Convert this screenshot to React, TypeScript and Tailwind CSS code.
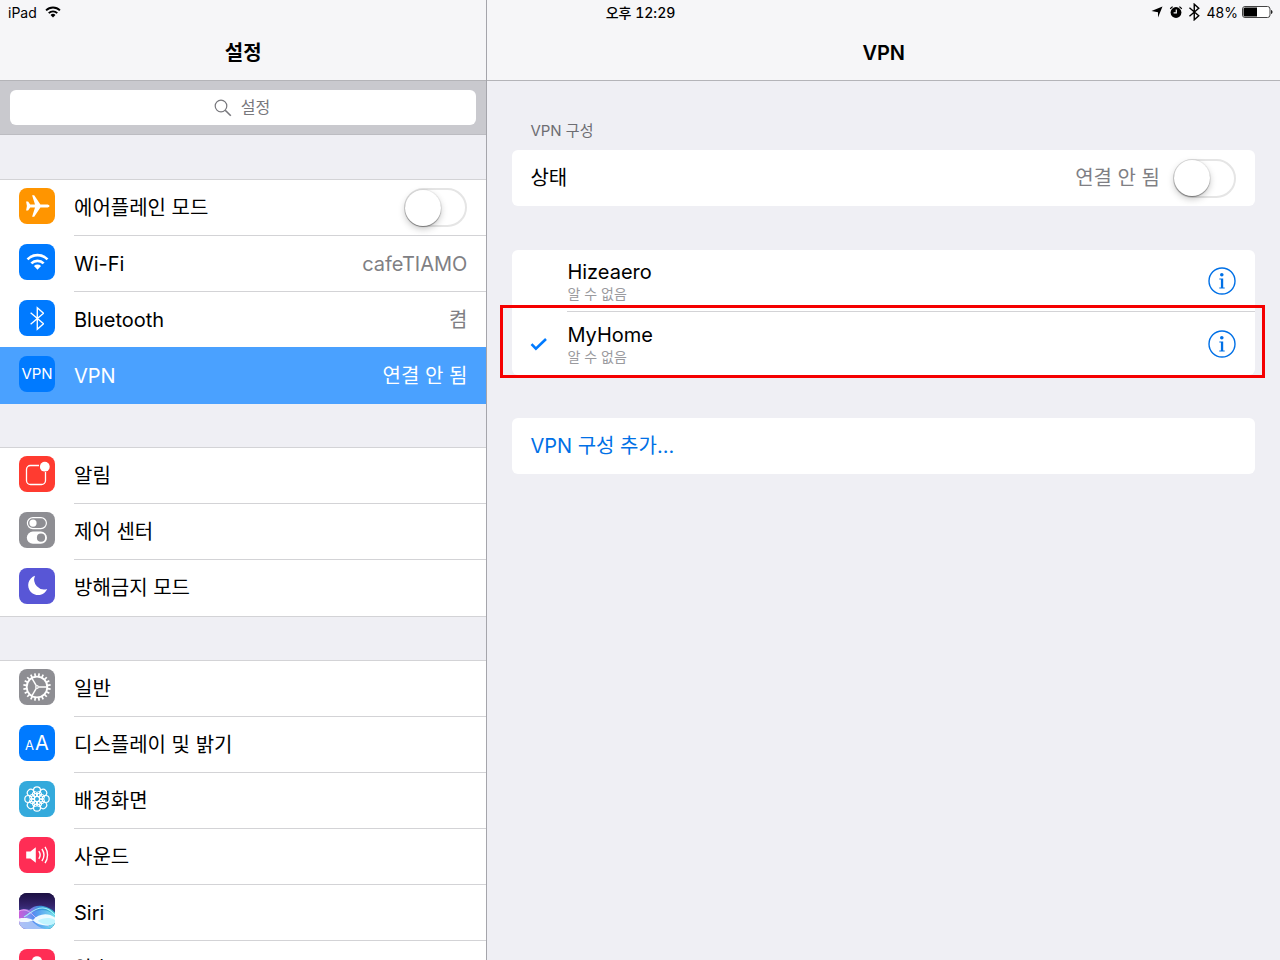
import type { ReactNode } from "react";

const FONT = "font-['Inter','Noto_Sans_CJK_KR',sans-serif]";

function Tile({ className, children }: { className: string; children?: ReactNode }) {
  return (
    <span className={`mt-2 flex size-9 shrink-0 justify-center overflow-hidden rounded-lg text-white ${className}`}>
      {children}
    </span>
  );
}

function WifiGlyph({ className }: { className: string }) {
  return (
    <svg viewBox="0 0 24 18" className={className} aria-hidden="true">
      <g fill="none" stroke="currentColor" strokeWidth="2.800">
        <path d="M1.600 6.600a14.600 14.600 0 0 1 20.800 0" />
        <path d="M5.600 10.800a9 9 0 0 1 12.800 0" />
      </g>
      <path d="M12 17.400 8.300 13.600a5.300 5.300 0 0 1 7.400 0z" fill="currentColor" />
    </svg>
  );
}

function BluetoothGlyph({ className, width }: { className: string; width: string }) {
  return (
    <svg viewBox="0 0 14 24" className={className} aria-hidden="true">
      <path d="M0.600 6.400 13 17 7 22.400V1.600L13 7 0.600 17.600" fill="none" stroke="currentColor" strokeWidth={width} />
    </svg>
  );
}

function Plane() {
  return (
    <svg viewBox="0 0 36 36" className="size-9" aria-hidden="true">
      <path
        fill="#fff"
        d="M30.600 18c0 .9-1.400 1.500-3 1.500h-6.200L15.200 28.800h-2.100l2.900-9.300h-4.800L9.100 22.500H7.100l.8-4.500-.8-4.500h2l2.100 3h4.800L13.100 7.200h2.100l6.200 9.300h6.200c1.600 0 3 .6 3 1.500z"
      />
    </svg>
  );
}

function Notify() {
  return (
    <svg viewBox="0 0 36 36" className="size-9" aria-hidden="true">
      <path d="M20 9.500h-8.500a4 4 0 0 0-4 4v11a4 4 0 0 0 4 4h11a4 4 0 0 0 4-4V16" fill="none" stroke="#fff" strokeWidth="1.300" />
      <circle cx="25.800" cy="10.700" r="4.900" fill="#fff" />
    </svg>
  );
}

function Toggles() {
  return (
    <svg viewBox="0 0 36 36" className="size-9" aria-hidden="true">
      <rect x="8.400" y="5.600" width="19" height="11" rx="5.500" fill="none" stroke="#fff" strokeWidth="1.200" />
      <circle cx="14" cy="11.100" r="3.600" fill="#fff" />
      <rect x="7.800" y="19.600" width="20.200" height="12.200" rx="6.100" fill="#fff" />
      <circle cx="22" cy="25.700" r="4.100" fill="#8e8e93" />
    </svg>
  );
}

function Moon() {
  return (
    <svg viewBox="0 0 36 36" className="size-9" aria-hidden="true">
      <path d="M16 7.800A9.900 9.900 0 1 0 28.200 21 9.900 9.900 0 0 1 16 7.800z" fill="#fff" />
    </svg>
  );
}

const TEETH = Array.from({ length: 20 }, (_, i) => i * 18);
const PETALS = Array.from({ length: 8 }, (_, i) => i * 45);

function Gear() {
  return (
    <svg viewBox="0 0 36 36" className="size-9" aria-hidden="true">
      <g stroke="#fff" fill="none">
        <circle cx="18" cy="18" r="10.300" strokeWidth="1.800" />
        {TEETH.map((a) => (
          <path key={a} d="M18 7.500V4.200" strokeWidth="1.700" transform={`rotate(${a + 9} 18 18)`} />
        ))}
        <circle cx="18" cy="18" r="1.300" strokeWidth="1.200" />
        {[90, 210, 330].map((a) => (
          <path key={a} d="M18 16.500V8" strokeWidth="1.400" transform={`rotate(${a} 18 18)`} />
        ))}
      </g>
    </svg>
  );
}

function Flower() {
  return (
    <svg viewBox="0 0 36 36" className="size-9" aria-hidden="true">
      <g stroke="#fff" fill="none" strokeWidth="1.200">
        {PETALS.map((a) => (
          <circle key={a} cx="18" cy="9.300" r="3.500" transform={`rotate(${a} 18 18)`} />
        ))}
        {PETALS.map((a) => (
          <circle key={a} cx="18" cy="12.800" r="2.500" strokeWidth="0.900" transform={`rotate(${a + 22} 18 18)`} />
        ))}
        <circle cx="18" cy="18" r="2.600" />
      </g>
    </svg>
  );
}

function Speaker() {
  return (
    <svg viewBox="0 0 36 36" className="size-9" aria-hidden="true">
      <path d="M7.200 14.500h4.200l5.400-4.300v15.600l-5.400-4.300H7.200z" fill="#fff" />
      <g stroke="#fff" fill="none" strokeWidth="1.400">
        <path d="M19.800 14.200a6.500 6.500 0 0 1 0 7.600" />
        <path d="M22.900 12a10.500 10.500 0 0 1 0 12" />
        <path d="M26 9.800a14.500 14.500 0 0 1 0 16.400" />
      </g>
    </svg>
  );
}

function SiriArt() {
  return (
    <svg viewBox="0 0 36 36" className="size-9" aria-hidden="true">
      <defs>
        <linearGradient id="night" x1="0" y1="0" x2="0" y2="1">
          <stop offset="0" stopColor="#1c1042" />
          <stop offset="0.350" stopColor="#34246c" />
          <stop offset="1" stopColor="#4a8be0" />
        </linearGradient>
        <linearGradient id="wave" x1="0" y1="0" x2="1" y2="0">
          <stop offset="0" stopColor="#d860e0" />
          <stop offset="0.300" stopColor="#9a78ee" />
          <stop offset="0.550" stopColor="#3b9be8" />
          <stop offset="1" stopColor="#36ccd0" />
        </linearGradient>
        <linearGradient id="base" x1="0" y1="0" x2="1" y2="0">
          <stop offset="0" stopColor="#d0b8f6" />
          <stop offset="0.400" stopColor="#5090f4" />
          <stop offset="1" stopColor="#8eeaf6" />
        </linearGradient>
      </defs>
      <path d="M0 0h36v36H0z" fill="url(#night)" />
      <path d="M0 17.500c4-2 7-2 10-.5 4-4 9-5 14-4 5 1 9 3.500 12 6.500v16.500H0z" fill="url(#wave)" opacity="0.900" />
      <path d="M0 29c7-3 12-12 23-12 6 0 10 3 13 6v13H0z" fill="url(#base)" opacity="0.800" />
      <path d="M5 24C11 21 15 14.500 24 15c5 .3 9 3.500 12 7" fill="none" stroke="#9ef0fa" strokeWidth="1.200" />
      <path d="M0 18c6-2.500 10 0 14 4s9 9 16 11" fill="none" stroke="#f0c0fa" strokeWidth="0.700" />
      <path d="M0 25.500c5-1 10-.5 14 1.500 5-6.500 15-8 22-2.500v5.500c-7 4-16 3-22-2.500-4 2-9 2.500-14 1z" fill="#f4feff" opacity="0.950" />
      <path d="M19 27.500c5-3 12-3.500 17-.5v3c-6 3.500-13 1.500-17-2z" fill="#c0f4ff" />
      <path d="M0 29c5 1 9 0 13-1 5 5.500 10 8 15 8H0z" fill="#a9c4f6" opacity="0.900" />
    </svg>
  );
}

function Fingerprint() {
  return (
    <svg viewBox="0 0 36 36" className="size-9" aria-hidden="true">
      <g fill="none" stroke="#fff" strokeWidth="1.700">
        <path d="M9.500 23v-4.500M26.500 23v-4.500" />
        <path d="M13 26v-8.500a5 5 0 0 1 10 0V26" />
        <path d="M18 17v12" />
      </g>
      <path d="M13 11.500a5 4.300 0 0 1 10 0z" fill="#fff" />
    </svg>
  );
}

function Switch({ label }: { label: string }) {
  return (
    <span className="relative flex h-10 w-[63px] shrink-0 items-center">
      <input
        type="checkbox"
        role="switch"
        aria-label={label}
        className="peer h-[39px] w-full appearance-none rounded-full border-2 border-[#e5e5e5] bg-white checked:border-[#4cd964] checked:bg-[#4cd964]"
      />
      <span className="pointer-events-none absolute top-[2px] left-px size-9 rounded-full bg-white shadow-[0_3px_7px_rgba(0,0,0,0.22),0_1px_1px_rgba(0,0,0,0.35),0_0_0_1px_rgba(0,0,0,0.05)] peer-checked:left-[26px]" />
    </span>
  );
}

type Item = { label: string; icon: ReactNode; value?: string; active?: boolean };

function ItemRow({ item, last }: { item: Item; last: boolean }) {
  const line = last ? "" : "border-b border-[#d3d3d6]";
  return (
    <li className={item.active ? "relative -mt-px bg-[#4aa1ff] pt-px text-white" : "text-black"}>
      <a href="#" className="flex h-14 items-start gap-[19px] pl-[19px]">
        {item.icon}
        <span className={`flex h-14 flex-1 items-center justify-between pr-[19px] ${line}`}>
          <span>{item.label}</span>
          {item.value && <span className={item.active ? "" : "text-[#7f7f84]"}>{item.value}</span>}
        </span>
      </a>
    </li>
  );
}

const network: Item[] = [
  { label: "Wi-Fi", value: "cafeTIAMO", icon: <Tile className="items-center bg-[#007aff]"><WifiGlyph className="w-[23px]" /></Tile> },
  { label: "Bluetooth", value: "켬", icon: <Tile className="items-center bg-[#007aff]"><BluetoothGlyph className="h-[25px]" width="1.300" /></Tile> },
  { label: "VPN", value: "연결 안 됨", active: true, icon: <Tile className="items-center bg-[#007aff] text-[15px]">VPN</Tile> },
];

const alerts: Item[] = [
  { label: "알림", icon: <Tile className="bg-[#ff3b30]"><Notify /></Tile> },
  { label: "제어 센터", icon: <Tile className="bg-[#8e8e93]"><Toggles /></Tile> },
  { label: "방해금지 모드", icon: <Tile className="bg-[#5856d6]"><Moon /></Tile> },
];

const general: Item[] = [
  { label: "일반", icon: <Tile className="bg-[#8e8e93]"><Gear /></Tile> },
  {
    label: "디스플레이 및 밝기",
    icon: (
      <Tile className="items-baseline gap-px bg-[#007aff] leading-9">
        <span className="text-[13px]">A</span>
        <span className="text-[20px]">A</span>
      </Tile>
    ),
  },
  { label: "배경화면", icon: <Tile className="bg-[#34aadc]"><Flower /></Tile> },
  { label: "사운드", icon: <Tile className="bg-[#ff2d55]"><Speaker /></Tile> },
  { label: "Siri", icon: <Tile className="bg-[#1a1140]"><SiriArt /></Tile> },
  { label: "암호", icon: <Tile className="bg-[#ff2d55]"><Fingerprint /></Tile> },
];

function StatusBar() {
  return (
    <div className="absolute inset-x-0 top-0 z-10 grid h-6 grid-cols-3 items-center pr-[7px] pl-2 text-[14px]">
      <span className="flex items-center gap-2">
        iPad
        <WifiGlyph className="w-4" />
      </span>
      <span className="text-center font-medium tabular-nums">오후 12:29</span>
      <span className="flex items-center justify-end gap-1">
        <svg viewBox="0 0 12 12" className="mr-[2px] size-3" aria-hidden="true">
          <path d="M11.500.500 7 11.500V6.200L.500 5z" fill="currentColor" />
        </svg>
        <svg viewBox="0 0 14 14" className="mr-[2px] size-[14px]" aria-hidden="true">
          <circle cx="7" cy="7.500" r="5.400" fill="currentColor" />
          <path d="M1.200 3.800 3.600 1.600M12.800 3.800 10.400 1.600" stroke="currentColor" strokeWidth="1.200" />
          <path d="M7.300 4.400v3.500H4.600" fill="none" stroke="#f7f7f8" strokeWidth="1.200" />
        </svg>
        <BluetoothGlyph className="mr-[3px] h-[18px]" width="1.900" />
        <span>48%</span>
        <svg viewBox="0 0 31 12" className="h-3 w-[31px]" aria-hidden="true">
          <rect x="0.500" y="0.500" width="27.500" height="11" rx="2.500" fill="#fff" stroke="#444" />
          <path d="M3 1.500h12v9H3a1.500 1.500 0 0 1-1.500-1.500V3A1.500 1.500 0 0 1 3 1.500z" fill="#000" />
          <path d="M29 4c2 .5 2 3.500 0 4z" fill="#222" />
        </svg>
      </span>
    </div>
  );
}

function TitleBar({ children }: { children: ReactNode }) {
  return (
    <header className="flex h-[81px] shrink-0 items-end justify-center border-b border-[#b4b4b8] bg-[#f6f6f8] pb-[11px]">
      <h1 className="text-[20px] leading-8 font-semibold">{children}</h1>
    </header>
  );
}

function InfoButton({ name }: { name: string }) {
  return (
    <button type="button" aria-label={`${name} 정보`} className="text-[#0070e6]">
      <svg viewBox="0 0 28 28" className="size-7" aria-hidden="true">
        <circle cx="14" cy="14" r="13" fill="none" stroke="currentColor" strokeWidth="1.400" />
        <circle cx="13.800" cy="7.700" r="1.800" fill="currentColor" />
        <path d="M11.300 11.400h3.900v9h1.500v1.100h-5.400v-1.100h1.600v-7.900h-1.600z" fill="currentColor" />
      </svg>
    </button>
  );
}

function VpnEntry({ name, selected }: { name: string; selected?: boolean }) {
  return (
    <div className="flex pl-[18px]">
      <span className="flex w-[37px] shrink-0 items-center">
        {selected && (
          <svg viewBox="0 0 18 14" className="h-[14px] w-[18px]" aria-hidden="true">
            <path d="M1.500 7.200 5.900 11.600 16 2" fill="none" stroke="#007aff" strokeWidth="2.600" />
          </svg>
        )}
      </span>
      <div className={`flex flex-1 items-center justify-between pr-[19px] ${selected ? "h-[63px]" : "h-[62px] border-b border-[#d3d3d6]"}`}>
        <div className="pt-[2px]">
          <p className="text-[20px] leading-6">{name}</p>
          <p className="text-[14px] leading-5 text-[#9a9a9e]">알 수 없음</p>
        </div>
        <InfoButton name={name} />
      </div>
    </div>
  );
}

export default function App() {
  return (
    <div className={`relative flex h-screen overflow-hidden bg-[#efeff4] text-[20px] text-black ${FONT}`}>
      <StatusBar />
      <aside className="flex w-[calc(38%+1px)] shrink-0 flex-col overflow-hidden border-r border-[#a5a5ab]">
        <TitleBar>설정</TitleBar>
        <div className="shrink-0 border-b border-[#bcbcc1] bg-[#c9c9ce] px-[10px] py-[9px]">
          <label className="flex h-[35px] items-center justify-center gap-[9px] rounded-md bg-white text-[#77777c]">
            <svg viewBox="0 0 18 18" className="size-[18px]" aria-hidden="true">
              <circle cx="7" cy="7" r="5.800" fill="none" stroke="currentColor" strokeWidth="1.200" />
              <path d="m11.200 11.200 5.600 5.600" stroke="currentColor" strokeWidth="1.600" />
            </svg>
            <input type="search" aria-label="설정 검색" placeholder="설정" className="w-8 appearance-none bg-transparent pb-[2px] text-[16px] outline-none placeholder:text-[#77777c] [&::-webkit-search-cancel-button]:hidden" />
          </label>
        </div>
        <nav className="flex flex-col gap-[43px] pt-[44px]">
          <ul className="border-t border-[#d3d3d6] bg-white">
            <li className="flex h-14 items-start gap-[19px] pl-[19px]">
              <Tile className="bg-[#ff9500]"><Plane /></Tile>
              <span className="flex h-14 flex-1 items-center justify-between border-b border-[#d3d3d6] pr-[19px]">
                에어플레인 모드
                <Switch label="에어플레인 모드" />
              </span>
            </li>
            {network.map((item, i) => (
              <ItemRow key={item.label} item={item} last={i === network.length - 1} />
            ))}
          </ul>
          <ul className="border-y border-[#d3d3d6] bg-white">
            {alerts.map((item, i) => (
              <ItemRow key={item.label} item={item} last={i === alerts.length - 1} />
            ))}
          </ul>
          <ul className="border-y border-[#d3d3d6] bg-white">
            {general.map((item, i) => (
              <ItemRow key={item.label} item={item} last={i === general.length - 1} />
            ))}
          </ul>
        </nav>
      </aside>
      <main className="flex min-w-0 flex-1 flex-col">
        <TitleBar>VPN</TitleBar>
        <div className="flex flex-col px-[25px] pt-[38px]">
          <h2 className="pb-[7px] pl-[18px] text-[15px] leading-6 text-[#6d6d72]">VPN 구성</h2>
          <section className="flex h-14 items-center justify-between rounded-md bg-white pr-[19px] pl-[18px]">
            <span>상태</span>
            <span className="flex items-center gap-[13px] text-[#7f7f84]">
              연결 안 됨
              <Switch label="상태" />
            </span>
          </section>
          <section className="relative mt-[44px] rounded-md bg-white">
            <VpnEntry name="Hizeaero" />
            <VpnEntry name="MyHome" selected />
            <div className="pointer-events-none absolute top-[55px] -right-[10px] -bottom-[3px] -left-3 border-3 border-[#f50000]" />
          </section>
          <section className="mt-[43px] rounded-md bg-white">
            <button type="button" className="flex h-14 w-full items-center pl-[18px] text-[#0070e6]">
              VPN 구성 추가...
            </button>
          </section>
        </div>
      </main>
    </div>
  );
}
